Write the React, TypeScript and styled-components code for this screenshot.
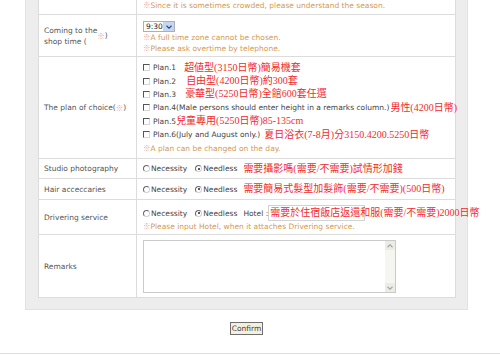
import React from "react";
import styled, { createGlobalStyle } from "styled-components";

const GlobalStyle = createGlobalStyle`
  html, body {
    margin: 0;
    padding: 0;
    background: #fff;
  }
  body {
    font-family: "DejaVu Sans", Verdana, sans-serif;
    font-size: 7.5px;
    color: #444;
  }
`;

const Page = styled.div`
  width: 500px;
  height: 355px;
  overflow: hidden;
  display: flex;
  flex-direction: column;
`;

const Panel = styled.div`
  margin-left: 25px;
  width: 443px;
  box-sizing: border-box;
  background: #ededed;
  border: 1px solid #e2e2e2;
  border-top: none;
  padding: 0 11px 11px 12px;
`;

const Table = styled.div`
  display: flex;
  flex-direction: column;
  background: #fff;
  border-left: 1px solid #dcdcdc;
  border-right: 1px solid #dcdcdc;
`;

const Row = styled.div<{ $h: number }>`
  display: grid;
  grid-template-columns: 98px 1fr;
  height: ${({ $h }) => $h}px;
  box-sizing: border-box;
  border-bottom: 1px solid #dcdcdc;
`;

const Label = styled.div`
  display: flex;
  align-items: center;
  padding: 0 4px 0 5px;
  border-right: 1px solid #dcdcdc;
  color: #555;
  line-height: 11px;
`;

const Value = styled.div<{ $pt?: number; $center?: boolean }>`
  display: flex;
  flex-direction: column;
  justify-content: ${({ $center }) => ($center ? "center" : "flex-start")};
  padding: ${({ $pt = 0 }) => $pt}px 6px 0 6px;
  white-space: nowrap;
  min-width: 0;
`;

const Note = styled.div<{ $lh?: number }>`
  color: #d49a52;
  line-height: ${({ $lh = 10 }) => $lh}px;
`;

const Mark = styled.span`
  font-family: "Noto Sans CJK JP", sans-serif;
  font-size: 7.5px;
  color: #e6a3a0;
`;

const Line = styled.div<{ $h?: number }>`
  display: flex;
  align-items: center;
  height: ${({ $h = 13.4 }) => $h}px;
  color: #444;
`;

const Red = styled.span<{ $ml?: number }>`
  font-family: "Liberation Serif", "Noto Sans CJK TC", serif;
  font-size: 10px;
  line-height: 12px;
  color: #f22b2b;
  margin-left: ${({ $ml = 0 }) => $ml}px;
`;

const Check = styled.span`
  width: 7px;
  height: 7px;
  box-sizing: border-box;
  border-top: 1px solid #555;
  border-left: 1px solid #555;
  border-right: 1px solid #d8d8d8;
  border-bottom: 1px solid #d8d8d8;
  background: #fff;
  margin-right: 3px;
  flex: none;
`;

const Radio = styled.span<{ $on?: boolean }>`
  position: relative;
  width: 7px;
  height: 7px;
  box-sizing: border-box;
  border-radius: 50%;
  border: 1px solid #d0d0d0;
  border-top-color: #666;
  border-left-color: #666;
  margin-right: 1px;
  flex: none;
  &::after {
    content: "";
    display: ${({ $on }) => ($on ? "block" : "none")};
    position: absolute;
    left: 1.5px;
    top: 1.5px;
    width: 2px;
    height: 2px;
    border-radius: 50%;
    background: #222;
  }
`;

const Choice = styled.span<{ $ml?: number }>`
  display: inline-flex;
  align-items: center;
  margin-left: ${({ $ml = 0 }) => $ml}px;
`;

const Select = styled.div`
  display: flex;
  align-items: center;
  width: 32px;
  height: 11px;
  box-sizing: border-box;
  border: 1px solid #a9b0ba;
  background: #fff;
  flex: none;
`;

const SelectText = styled.span`
  flex: 1;
  padding-left: 2px;
  color: #222;
  line-height: 9px;
`;

const SelectArrow = styled.span`
  width: 11px;
  height: 9px;
  background: #c7d6ef;
  display: flex;
  align-items: center;
  justify-content: center;
`;

const HotelBox = styled.span`
  display: inline-flex;
  align-items: center;
  width: 97px;
  height: 16px;
  box-sizing: border-box;
  border: 1px solid #d2d2d2;
  padding-left: 1px;
  overflow: visible;
`;

const TextBox = styled.div`
  width: 253px;
  height: 53px;
  box-sizing: border-box;
  border: 1px solid #cacaca;
  background: #fff;
  display: flex;
  justify-content: flex-end;
`;

const ScrollBar = styled.div`
  width: 10px;
  background: #f6f6f1;
  display: flex;
  flex-direction: column;
  justify-content: space-between;
`;

const ScrollBtn = styled.span`
  height: 9px;
  background: #ecece6;
  display: flex;
  align-items: center;
  justify-content: center;
`;

const ButtonRow = styled.div`
  margin-left: 25px;
  width: 443px;
  display: flex;
  justify-content: center;
  margin-top: 12px;
`;

const ConfirmButton = styled.button`
  width: 33px;
  height: 13px;
  padding: 0;
  box-sizing: border-box;
  border: 1px solid #6f6f6f;
  background: #f4f0de;
  font-family: "DejaVu Sans", Verdana, sans-serif;
  font-size: 7.5px;
  color: #4a3a4a;
  line-height: 11px;
`;

const Footer = styled.div`
  margin-top: 18px;
  border-top: 1px solid #dedede;
`;

const Chevron = ({ dir, color }: { dir: "up" | "down"; color: string }) => (
  <svg width="6" height="4" viewBox="0 0 6 4">
    <path
      d={dir === "down" ? "M0.5 0.8 L3 3.2 L5.5 0.8" : "M0.5 3.2 L3 0.8 L5.5 3.2"}
      fill="none"
      stroke={color}
      strokeWidth="1.2"
    />
  </svg>
);

const plans = [
  { name: "Plan.1", ml: 8, red: "超値型(3150日幣)簡易機套" },
  { name: "Plan.2", ml: 10, red: "自由型(4200日幣)約300套" },
  { name: "Plan.3", ml: 9, red: "豪華型(5250日幣)全館600套任選" },
  {
    name: "Plan.4(Male persons should enter height in a remarks column.)",
    ml: 1,
    red: "男性(4200日幣)",
  },
  { name: "Plan.5", ml: 0, red: "兒童專用(5250日幣)85-135cm" },
  { name: "Plan.6(July and August only.)", ml: 4, red: "夏日浴衣(7-8月)分3150.4200.5250日幣" },
];

const NeedChoice = () => (
  <>
    <Choice>
      <Radio />
      Necessity
    </Choice>
    <Choice $ml={8}>
      <Radio $on />
      Needless
    </Choice>
  </>
);

export default function App() {
  return (
    <Page>
      <GlobalStyle />
      <Panel>
        <Table>
          <Row $h={15}>
            <Label />
            <Value>
              <Note>
                <Mark>※</Mark>Since it is sometimes crowded, please understand the season.
              </Note>
            </Value>
          </Row>
          <Row $h={42}>
            <Label>
              Coming to the
              <br />
              shop time (<Mark>※</Mark>)
            </Label>
            <Value $pt={6}>
              <Select>
                <SelectText>9:30</SelectText>
                <SelectArrow>
                  <Chevron dir="down" color="#2b4c8c" />
                </SelectArrow>
              </Select>
              <Note>
                <Mark>※</Mark>A full time zone cannot be chosen.
              </Note>
              <Note>
                <Mark>※</Mark>Please ask overtime by telephone.
              </Note>
            </Value>
          </Row>
          <Row $h={102}>
            <Label>
              The plan of choice(<Mark>※</Mark>)
            </Label>
            <Value $pt={4}>
              {plans.map((p) => (
                <Line key={p.name}>
                  <Check />
                  {p.name}
                  <Red $ml={p.ml}>{p.red}</Red>
                </Line>
              ))}
              <Note $lh={13.4}>
                <Mark>※</Mark>A plan can be changed on the day.
              </Note>
            </Value>
          </Row>
          <Row $h={20}>
            <Label>Studio photography</Label>
            <Value $center>
              <Line $h={13}>
                <NeedChoice />
                <Red $ml={6}>需要攝影嗎(需要/不需要)試情形加錢</Red>
              </Line>
            </Value>
          </Row>
          <Row $h={21}>
            <Label>Hair acceccaries</Label>
            <Value $center>
              <Line $h={13}>
                <NeedChoice />
                <Red $ml={6}>需要簡易式髮型加髮飾(需要/不需要)(500日幣)</Red>
              </Line>
            </Value>
          </Row>
          <Row $h={35}>
            <Label>Drivering service</Label>
            <Value $pt={5}>
              <Line $h={16}>
                <NeedChoice />
                <Choice $ml={6}>Hotel :</Choice>
                <HotelBox>
                  <Red>需要於住宿飯店返還和服(需要/不需要)2000日幣</Red>
                </HotelBox>
              </Line>
              <Note>
                <Mark>※</Mark>Please input Hotel, when it attaches Drivering service.
              </Note>
            </Value>
          </Row>
          <Row $h={63}>
            <Label>Remarks</Label>
            <Value $pt={5}>
              <TextBox>
                <ScrollBar>
                  <ScrollBtn>
                    <Chevron dir="up" color="#a8a8a0" />
                  </ScrollBtn>
                  <ScrollBtn>
                    <Chevron dir="down" color="#a8a8a0" />
                  </ScrollBtn>
                </ScrollBar>
              </TextBox>
            </Value>
          </Row>
        </Table>
      </Panel>
      <ButtonRow>
        <ConfirmButton>Confirm</ConfirmButton>
      </ButtonRow>
      <Footer />
    </Page>
  );
}
